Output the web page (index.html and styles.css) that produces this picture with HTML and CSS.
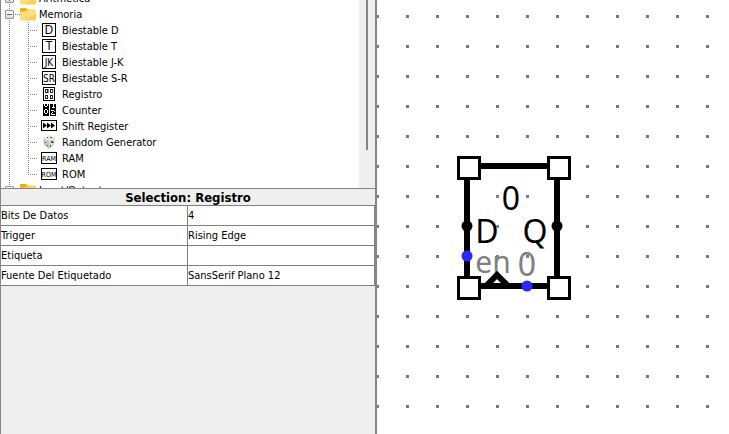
FILE: index.html
```html
<!DOCTYPE html>
<html lang="es">
<head>
<meta charset="utf-8">
<title>Registro</title>
<link rel="stylesheet" href="styles.css">
</head>
<body>
<div class="app">
  <aside class="sidebar">
    <nav class="explorer" aria-label="Componentes">
      <ul class="tree">
        <li class="folder">
          <button class="toggle plus" aria-label="Expandir"></button><svg class="folder-icon" viewBox="0 0 16 14"><path d="M0 4V2Q0 1 1 1H6L8 4Z" fill="#f5ad0c"/><rect y="2.500" width="16" height="11" rx="1" fill="#fdcf57"/><path d="M0 5Q5 3 16 3V7L4 13H0Z" fill="#ffdc7c"/></svg><span>Aritmética</span>
        </li>
        <li class="folder">
          <button class="toggle" aria-label="Contraer"></button><svg class="folder-icon" viewBox="0 0 16 14"><rect y="2.500" width="16" height="11" rx="1" fill="#fdcf57"/><path d="M0 5Q5 3 16 3V7L4 13H0Z" fill="#ffdc7c"/><path d="M0 5V2Q0 1 1 1H6L8 3L6 4Z" fill="#f5ad0c"/></svg><span>Memoria</span>
        </li>
        <li class="branch">
          <ul class="leaves">
            <li><svg class="icon" viewBox="0 0 16 16"><rect class="frame" x="1.500" y="1.500" width="13" height="13"/><text class="glyph" x="8" y="12">D</text></svg><span>Biestable D</span></li>
            <li><svg class="icon" viewBox="0 0 16 16"><rect class="frame" x="1.500" y="1.500" width="13" height="13"/><text class="glyph" x="8" y="12">T</text></svg><span>Biestable T</span></li>
            <li><svg class="icon" viewBox="0 0 16 16"><rect class="frame" x="1.500" y="1.500" width="13" height="13"/><text class="glyph pair" x="8" y="12">JK</text></svg><span>Biestable J-K</span></li>
            <li><svg class="icon" viewBox="0 0 16 16"><rect class="frame" x="1.500" y="1.500" width="13" height="13"/><text class="glyph pair" x="8" y="12">SR</text></svg><span>Biestable S-R</span></li>
            <li><svg class="icon" viewBox="0 0 16 16"><rect class="frame" x="2.500" y="1.500" width="11" height="13"/><g class="ring"><rect x="4.500" y="3.500" width="2" height="3"/><rect x="9.500" y="3.500" width="2" height="3"/><rect x="4.500" y="9.500" width="2" height="3"/><rect x="9.500" y="9.500" width="2" height="3"/><path d="M7.500 3V7" stroke="#888"/><path d="M12 4V6" stroke="#888"/></g></svg><span>Registro</span></li>
            <li><svg class="icon" viewBox="0 0 16 16"><path d="M2 2H8V14H2ZM9 2H15V14H9Z"/><g class="digit"><path d="M3.500 2V4M6.500 2V4M4 4.500H6"/><path d="M4 7.500H6M3.500 8V11M6.500 8V11M4 11.500H6"/><path d="M12.500 2V5M11 5.500H14"/><path d="M10 8.500H13M13.500 9V10M12 10.500H11M10.500 11V12.500H14"/></g></svg><span>Counter</span></li>
            <li><svg class="icon" viewBox="0 0 16 16"><rect class="frame" x="0.500" y="2.500" width="15" height="10"/><path d="M2 4.500L6 7.500L2 10.500ZM6 4.500L10 7.500L6 10.500ZM10 4.500L14 7.500L10 10.500Z"/></svg><span>Shift Register</span></li>
            <li><svg class="icon" viewBox="0 0 16 16"><path d="M2 5L8 1L14 4L13 11L8 15L3 11Z" fill="#e6e6df"/><path d="M2 5L8 7L8 15L3 11Z" fill="#c4c3ba"/><path d="M8 7L14 4L13 11L8 15Z" fill="#d8d8d0"/><path d="M6 3H7V4H6ZM9 3H11V4H9ZM4 8H5V9H4ZM6 11H7V12H6ZM10 7H12V9H10ZM9 11H10V13H9ZM12 8H13V9H12Z" fill="#55554f"/></svg><span>Random Generator</span></li>
            <li><svg class="icon" viewBox="0 0 16 16"><rect class="frame" x="0.500" y="2.500" width="15" height="11"/><text class="glyph tiny" x="8" y="11">RAM</text></svg><span>RAM</span></li>
            <li><svg class="icon" viewBox="0 0 16 16"><rect class="frame" x="0.500" y="2.500" width="15" height="11"/><text class="glyph tiny" x="8" y="11">ROM</text></svg><span>ROM</span></li>
          </ul>
        </li>
        <li class="folder">
          <button class="toggle plus" aria-label="Expandir"></button><svg class="folder-icon" viewBox="0 0 16 14"><rect y="2.500" width="16" height="11" rx="1" fill="#fdcf57"/><path d="M0 5V2Q0 1 1 1H6L8 3L6 4Z" fill="#f5ad0c"/></svg><span>Input/Output</span>
        </li>
      </ul>
      <div class="scrollbar"><div class="thumb"></div></div>
    </nav>
    <section class="attributes">
      <h2>Selection: Registro</h2>
      <table>
        <tbody>
          <tr><th scope="row">Bits De Datos</th><td>4</td></tr>
          <tr><th scope="row">Trigger</th><td>Rising Edge</td></tr>
          <tr><th scope="row">Etiqueta</th><td></td></tr>
          <tr><th scope="row">Fuente Del Etiquetado</th><td>SansSerif Plano 12</td></tr>
        </tbody>
      </table>
    </section>
  </aside>
  <main class="canvas">
    <svg class="component" viewBox="0 0 114 144" role="img" aria-label="Registro">
      <rect x="10" y="10" width="90" height="120" fill="none" stroke="#000" stroke-width="6"/>
      <circle cx="10" cy="70" r="5.500"/>
      <circle cx="100" cy="70" r="5.500"/>
      <g class="pin-text">
        <text x="54" y="54">0</text>
        <text x="30" y="87">D</text>
        <text x="78" y="87">Q</text>
        <g class="dim"><text class="enable" x="36" y="117">en</text><text x="70" y="120">0</text></g>
      </g>
      <g class="grid-dots"><rect x="39" y="39" width="3" height="3"/><rect x="69" y="39" width="3" height="3"/><rect x="39" y="69" width="3" height="3"/><rect x="39" y="99" width="3" height="3"/><rect x="69" y="99" width="3" height="3"/></g>
      <path d="M28 131L40 119L52 131" fill="none" stroke="#000" stroke-width="6"/>
      <circle class="pin" cx="10" cy="100" r="5.500"/>
      <circle class="pin" cx="70" cy="130" r="5.500"/>
      <g class="handles">
        <rect x="1.500" y="1.500" width="21" height="21"/>
        <rect x="91.500" y="1.500" width="21" height="21"/>
        <rect x="1.500" y="121.500" width="21" height="21"/>
        <rect x="91.500" y="121.500" width="21" height="21"/>
      </g>
    </svg>
  </main>
</div>
</body>
</html>
```
FILE: styles.css
```css
* { box-sizing: border-box; }

body {
  margin: 0;
  font-family: "DejaVu Sans Condensed", "DejaVu Sans", sans-serif;
  font-size: 11px;
  color: #000;
}

.app {
  display: grid;
  grid-template-columns: 377px 1fr;
  min-height: 100vh;
  background: #fff;
}

.sidebar {
  display: flex;
  flex-direction: column;
  background: #efefef;
  border-left: 1px solid #82878f;
  border-right: 2px solid #82878f;
}

.explorer {
  display: flex;
  height: 189px;
  overflow: hidden;
  background: #fff;
  border-bottom: 1px solid #82878f;
}

ul { list-style: none; margin: 0; padding: 0; }

.tree { flex: 1; margin-top: -10px; }

.folder {
  display: flex;
  align-items: center;
  height: 16px;
  padding-left: 4px;
  background:
    repeating-linear-gradient(#808080 0 1px, transparent 1px 2px) 8px 0 / 1px 100% no-repeat,
    repeating-linear-gradient(90deg, #808080 0 1px, transparent 1px 2px) 14px 8px / 5px 1px no-repeat;
}

.folder-icon { width: 16px; height: 14px; margin: 0 3px 0 6px; }

.folder span, .leaves span { white-space: nowrap; line-height: 16px; padding-top: 2px; }

.toggle {
  width: 9px;
  height: 9px;
  padding: 0;
  border: 1px solid #919191;
  border-radius: 1px;
  background:
    linear-gradient(#4b63a7, #4b63a7) center / 5px 1px no-repeat,
    linear-gradient(#fff, #ddd);
}

.toggle.plus {
  background:
    linear-gradient(#4b63a7, #4b63a7) center / 5px 1px no-repeat,
    linear-gradient(#4b63a7, #4b63a7) center / 1px 5px no-repeat,
    linear-gradient(#fff, #ddd);
}

.branch {
  padding-left: 27px;
  background: repeating-linear-gradient(#808080 0 1px, transparent 1px 2px) 8px 0 / 1px 100% no-repeat;
}

.leaves {
  background: repeating-linear-gradient(#808080 0 1px, transparent 1px 2px) 0 0 / 1px 152px no-repeat;
}

.leaves li {
  display: flex;
  align-items: center;
  height: 16px;
  padding-left: 13px;
  gap: 5px;
  background: repeating-linear-gradient(90deg, #808080 0 1px, transparent 1px 2px) 0 8px / 10px 1px no-repeat;
}

.icon { width: 16px; height: 16px; }
.frame { fill: #fff; stroke: #000; }
.glyph { font: 12px "Noto Sans", sans-serif; text-anchor: middle; }
.pair { font: 10px "DejaVu Sans Condensed", sans-serif; }
.tiny { font: 7px "DejaVu Sans Condensed", sans-serif; }
.ring { fill: none; stroke: #222; }
.digit { fill: none; stroke: #fff; }

.scrollbar {
  width: 16px;
  background: #efefef;
  padding-left: 7px;
}

.thumb { width: 2px; height: 150px; background: #858585; }

h2 {
  margin: 0;
  height: 16px;
  line-height: 17px;
  font-size: 13px;
  text-align: center;
}

table {
  width: 100%;
  table-layout: fixed;
  border-collapse: separate;
  border-spacing: 0;
  border-top: 1px solid #808080;
  background: #fff;
}

th, td {
  height: 20px;
  padding: 0;
  font-weight: normal;
  text-align: left;
  border-right: 1px solid #808080;
  border-bottom: 1px solid #808080;
}

.canvas {
  padding: 156px 0 0 80px;
  background: conic-gradient(from 90deg at 27px 27px, #787878 90deg, #fff 0) -28px -12px / 30px 30px;
}

.component { display: block; width: 114px; height: 144px; }
.pin-text { font: 32px "Noto Sans", sans-serif; text-anchor: middle; }
.enable { font-size: 30px; }
.dim { fill: #808080; }
.grid-dots { fill: #808080; }
.pin { fill: #2828ff; }
.handles { fill: #fff; stroke: #000; stroke-width: 3px; }
```
